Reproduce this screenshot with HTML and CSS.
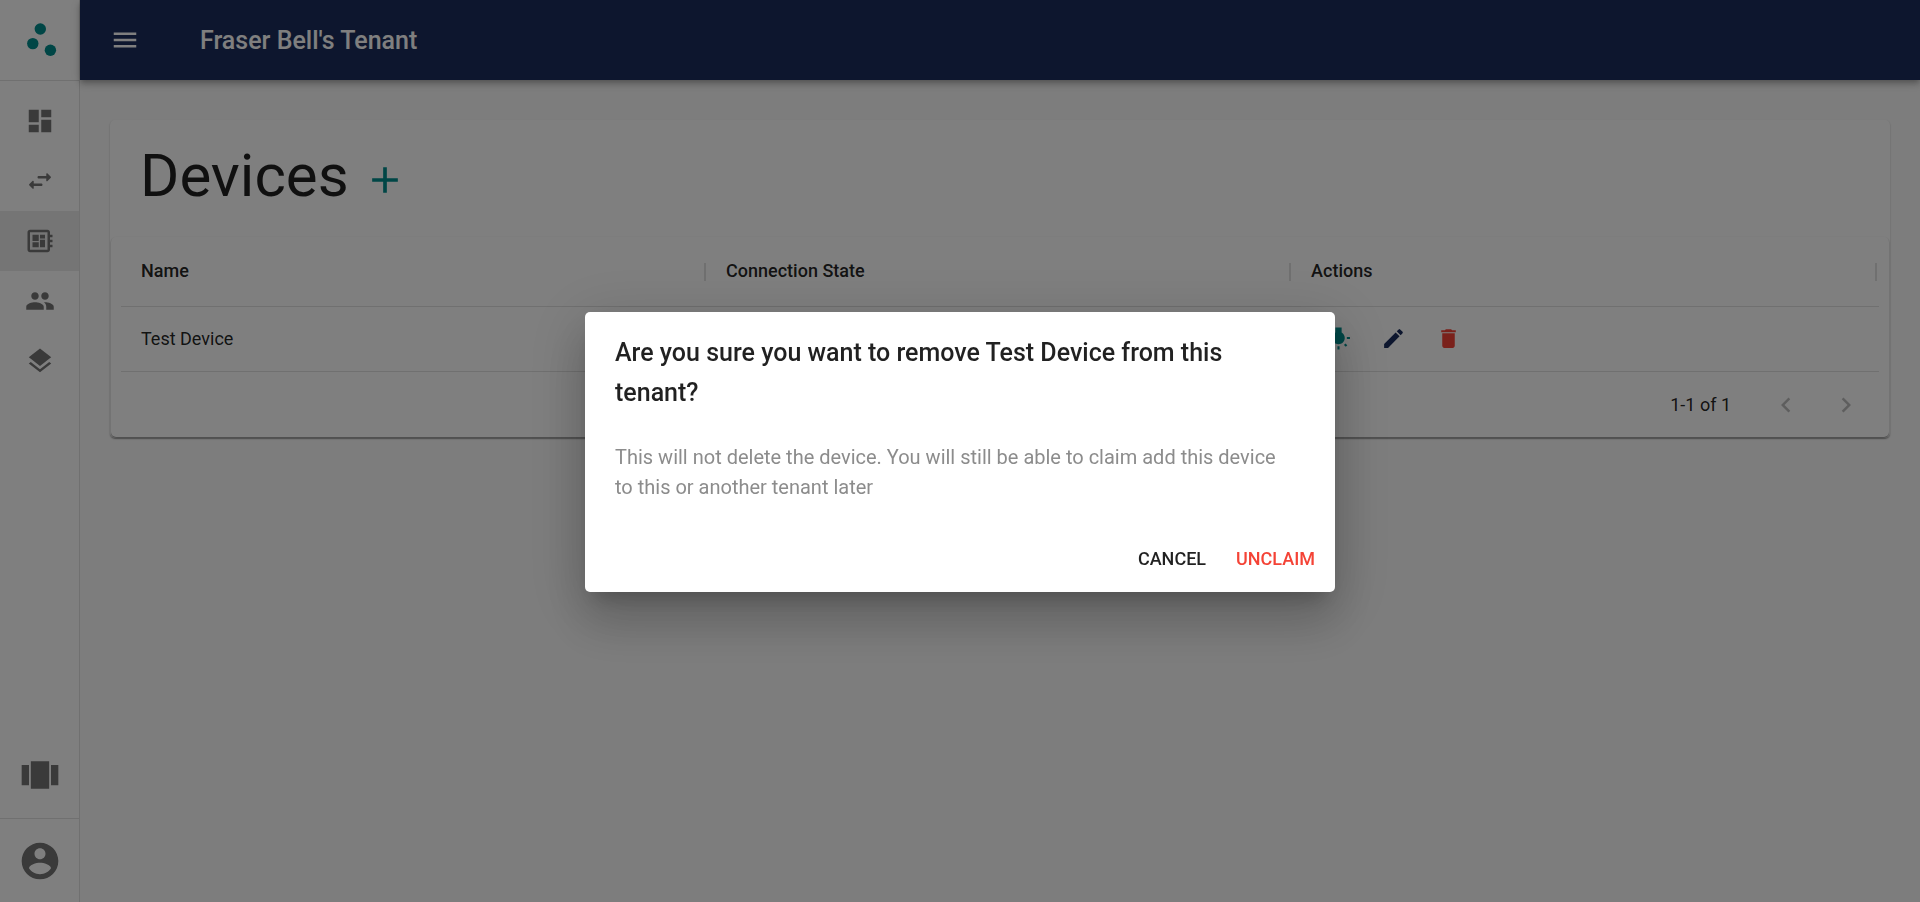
FILE: index.html
```html
<!DOCTYPE html>
<html lang="en">
<head>
<meta charset="utf-8">
<title>Devices</title>
<link rel="stylesheet" href="styles.css">
</head>
<body>
<div class="app">
  <aside class="sidebar">
    <a class="logo" href="#" aria-label="Home">
      <svg viewBox="0 0 80 80" width="80" height="80"><circle cx="40.3" cy="29" r="5.7"/><circle cx="32.8" cy="43.6" r="5.7"/><circle cx="50.4" cy="50.3" r="5.7"/></svg>
    </a>
    <nav class="nav">
      <a class="nav-item" href="#" aria-label="Dashboard"><svg class="icon" viewBox="0 0 24 24"><path d="M3 13h8V3H3v10zm0 8h8v-6H3v6zm10 0h8V11h-8v10zm0-18v6h8V3h-8z"/></svg></a>
      <a class="nav-item" href="#" aria-label="Rules"><svg class="icon" viewBox="0 0 24 24"><path d="M6.14 11.86l-2.78 2.79c-.19.2-.19.51 0 .71l2.78 2.79c.31.32.85.09.85-.35V16H13c.55 0 1-.45 1-1s-.45-1-1-1H6.99v-1.79c0-.45-.54-.67-.85-.35zm14.510-3.210l-2.780-2.790c-.31-.32-.85-.09-.85.35V8H11c-.55 0-1 .45-1 1s.45 1 1 1h6.010v1.790c0 .45.54.67.85.35l2.780-2.790c.2-.19.2-.51.010-.7z"/></svg></a>
      <a class="nav-item active" href="#" aria-label="Devices"><svg class="icon" viewBox="0 0 24 24"><path d="M22 9V7h-2V5c0-1.1-.9-2-2-2H4c-1.1 0-2 .9-2 2v14c0 1.1.9 2 2 2h14c1.1 0 2-.9 2-2v-2h2v-2h-2v-2h2v-2h-2V9h2zm-4 10H4V5h14v14zM6 13h5v4H6zm6-6h4v3h-4zM6 7h5v5H6zm6 4h4v6h-4z"/></svg></a>
      <a class="nav-item" href="#" aria-label="Users"><svg class="icon" viewBox="0 0 24 24"><path d="M16 11c1.66 0 2.99-1.34 2.99-3S17.66 5 16 5c-1.66 0-3 1.34-3 3s1.34 3 3 3zm-8 0c1.66 0 2.99-1.34 2.99-3S9.66 5 8 5C6.34 5 5 6.34 5 8s1.34 3 3 3zm0 2c-2.33 0-7 1.17-7 3.5V19h14v-2.5c0-2.33-4.67-3.5-7-3.5zm8 0c-.29 0-.62.02-.97.05 1.16.84 1.97 1.97 1.97 3.45V19h6v-2.5c0-2.33-4.67-3.5-7-3.5z"/></svg></a>
      <a class="nav-item" href="#" aria-label="Layers"><svg class="icon" viewBox="0 0 24 24"><path d="M11.99 18.54l-7.37-5.73L3 14.07l9 7 9-7-1.63-1.27-7.38 5.74zM12 16l7.36-5.73L21 9l-9-7-9 7 1.63 1.27L12 16z"/></svg></a>
    </nav>
    <button class="side-button" aria-label="Switch tenant"><svg viewBox="0 0 24 24"><path d="M7 19h10V4H7v15zm-5-2h4V6H2v11zM18 6v11h4V6h-4z"/></svg></button>
    <button class="side-button account" aria-label="Account"><svg viewBox="0 0 24 24"><path d="M12 2C6.48 2 2 6.48 2 12s4.48 10 10 10 10-4.48 10-10S17.52 2 12 2zm0 3c1.66 0 3 1.34 3 3s-1.34 3-3 3-3-1.34-3-3 1.34-3 3-3zm0 14.200c-2.500 0-4.710-1.280-6-3.220.03-1.990 4-3.080 6-3.080 1.990 0 5.970 1.090 6 3.080-1.290 1.940-3.500 3.220-6 3.220z"/></svg></button>
  </aside>
  <div class="page">
    <header class="appbar">
      <button class="menu-button" aria-label="Menu"><svg class="icon" viewBox="0 0 24 24"><path d="M3 18h18v-2H3v2zm0-5h18v-2H3v2zm0-7v2h18V6H3z"/></svg></button>
      <div class="tenant">Fraser Bell's Tenant</div>
    </header>
    <main class="main">
      <section class="card">
        <div class="card-head">
          <h1>Devices</h1>
          <button class="add-button" aria-label="Add device"><svg viewBox="0 0 24 24"><path d="M19 13h-6v6h-2v-6H5v-2h6V5h2v6h6v2z"/></svg></button>
        </div>
        <div class="table-panel">
          <table>
            <thead><tr><th>Name</th><th>Connection State</th><th>Actions</th></tr></thead>
            <tbody><tr>
              <td>Test Device</td><td></td>
              <td><div class="actions">
                <button class="teal" aria-label="Blink light"><svg viewBox="0 0 24 24"><path d="M3.550 18.540l1.410 1.410 1.800-1.790-1.410-1.410-1.800 1.790zM11 22.450h2V19.500h-2v2.950zM4 10.500H1v2h3v-2zm11-4.190V1.500H9v4.810C7.210 7.350 6 9.280 6 11.500c0 3.310 2.690 6 6 6s6-2.690 6-6c0-2.220-1.210-4.150-3-5.190zm5 4.190v2h3v-2h-3zm-2.760 7.660l1.790 1.800 1.410-1.410-1.800-1.790-1.400 1.400z"/></svg></button>
                <button class="navy" aria-label="Edit"><svg viewBox="0 0 24 24"><path d="M3 17.250V21h3.750L17.810 9.940l-3.750-3.750L3 17.250zM20.710 7.040c.39-.39.39-1.020 0-1.410l-2.340-2.340a.996.996 0 0 0-1.410 0l-1.830 1.830 3.750 3.750 1.830-1.830z"/></svg></button>
                <button class="red" aria-label="Delete"><svg viewBox="0 0 24 24"><path d="M6 19c0 1.100.9 2 2 2h8c1.100 0 2-.9 2-2V7H6v12zM19 4h-3.500l-1-1h-5l-1 1H5v2h14V4z"/></svg></button>
              </div></td>
            </tr></tbody>
          </table>
          <div class="pager">
            <span>1-1 of 1</span>
            <button disabled aria-label="Previous page"><svg class="icon" viewBox="0 0 24 24"><path d="M15.410 7.410L14 6l-6 6 6 6 1.410-1.410L10.830 12z"/></svg></button>
            <button disabled aria-label="Next page"><svg class="icon" viewBox="0 0 24 24"><path d="M10 6L8.590 7.410 13.170 12l-4.580 4.590L10 18l6-6z"/></svg></button>
          </div>
        </div>
      </section>
    </main>
  </div>
</div>
<div class="backdrop">
  <div class="dialog" role="dialog" aria-modal="true" aria-labelledby="dialog-title">
    <h2 id="dialog-title">Are you sure you want to remove Test Device from this tenant?</h2>
    <p>This will not delete the device. You will still be able to claim add this device to this or another tenant later</p>
    <div class="dialog-actions">
      <button>CANCEL</button>
      <button class="danger">UNCLAIM</button>
    </div>
  </div>
</div>
</body>
</html>
```

FILE: styles.css
```css
* { box-sizing: border-box; }
body {
  margin: 0;
  font-family: Roboto, "Liberation Sans", sans-serif;
  font-size: 18px;
  color: rgba(0, 0, 0, 0.87);
  background: #fafafa;
}
button {
  display: flex;
  margin: 0;
  padding: 0;
  border: 0;
  background: none;
  color: inherit;
  font: inherit;
  cursor: pointer;
}
svg { display: block; fill: currentColor; }
.icon { width: 30px; height: 30px; }

.app { display: flex; min-height: 100vh; }
.sidebar {
  display: flex;
  flex-direction: column;
  flex: none;
  width: 80px;
  background: #fff;
  border-right: 1px solid #e0e0e0;
  color: #757575;
}
.logo {
  display: block;
  height: 81px;
  border-bottom: 1px solid #e0e0e0;
  color: #008c8c;
  overflow: hidden;
}
.nav { flex: 1; padding-top: 10px; }
.nav-item {
  display: flex;
  align-items: center;
  height: 60px;
  padding-left: 25px;
  color: inherit;
}
.nav-item.active { background: #ebebeb; }
.side-button { justify-content: center; padding-bottom: 20px; }
.side-button svg { width: 44px; height: 44px; }
.side-button.account { padding: 20px 0 19px; border-top: 1px solid #e0e0e0; }

.page { flex: 1; min-width: 0; }
.appbar {
  display: flex;
  align-items: center;
  height: 80px;
  padding: 0 30px;
  gap: 60px;
  background: #1a2d5c;
  color: #fff;
  box-shadow: 0 2px 5px -1px rgba(0, 0, 0, 0.2), 0 5px 6px rgba(0, 0, 0, 0.14), 0 1px 12px rgba(0, 0, 0, 0.12);
}
.tenant { padding-top: 2px; font-size: 25px; font-weight: 500; line-height: 40px; }
.main { padding: 40px 30px; }
.card {
  padding: 0 1px 1px;
  background: #fff;
  border-radius: 5px;
  box-shadow: 0 1px 2px rgba(0, 0, 0, 0.2), 0 1px 1px rgba(0, 0, 0, 0.14);
}
.card-head {
  display: flex;
  align-items: center;
  gap: 14px;
  height: 117px;
  padding: 0 29px 6px;
}
h1 { margin: 0; font-size: 60px; font-weight: 400; line-height: 70px; }
.add-button { padding-top: 8px; color: #008c8c; }
.add-button svg { width: 44px; height: 44px; }

.table-panel {
  padding: 0 10px;
  border-radius: 5px;
  box-shadow: 0 1px 2px rgba(0, 0, 0, 0.3), 0 1px 1px rgba(0, 0, 0, 0.2);
}
table { width: 100%; table-layout: fixed; border-collapse: separate; border-spacing: 0; }
th, td { padding: 0 0 2px 20px; text-align: left; border-bottom: 1px solid #e0e0e0; }
th {
  width: 33.28%;
  height: 70px;
  font-weight: 500;
  background: linear-gradient(#e0e0e0, #e0e0e0) right center / 2px 18px no-repeat;
}
th:last-child { width: auto; background-position: right 2px center; }
td { height: 65px; }
.actions { display: flex; }
.actions button { padding: 15px; }
.actions svg { width: 25px; height: 25px; }
.teal { color: #008c8c; }
.navy { color: #1a2d5c; }
.red { color: #f44336; }
.pager { display: flex; align-items: center; justify-content: flex-end; height: 65px; padding-right: 3px; }
.pager span { margin-right: 25px; }
.pager button { padding: 15px; color: rgba(0, 0, 0, 0.26); }

.backdrop {
  position: fixed;
  inset: 0;
  display: flex;
  align-items: center;
  justify-content: center;
  padding-top: 2px;
  background: rgba(0, 0, 0, 0.5);
}
.dialog {
  width: 100%;
  max-width: 750px;
  background: #fff;
  border-radius: 5px;
  box-shadow: 0 14px 19px -9px rgba(0, 0, 0, 0.2), 0 30px 48px 4px rgba(0, 0, 0, 0.14), 0 11px 58px 10px rgba(0, 0, 0, 0.12);
}
.dialog h2 { margin: 0; padding: 21px 30px 19px; font-size: 25px; font-weight: 500; line-height: 40px; }
.dialog p { margin: 0; padding: 10px 40px 25px 30px; font-size: 20px; line-height: 30px; color: #8c8c8c; }
.dialog-actions { display: flex; justify-content: flex-end; gap: 10px; padding: 10px 10px 11px; }
.dialog-actions button { padding: 7px 10px; font-weight: 500; line-height: 30px; }
.dialog-actions .danger { color: #f44336; }
```
